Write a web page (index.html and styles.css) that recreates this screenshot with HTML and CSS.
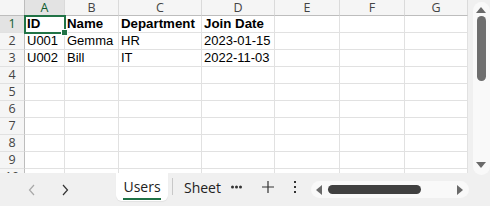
FILE: index.html
```html
<!DOCTYPE html>
<html>
<head>
<meta charset="utf-8">
<link rel="stylesheet" href="styles.css">
</head>
<body>
<div class="app">
  <div class="top">
    <div class="sheet">
      <div class="row hdr">
        <div class="c rh corner"></div>
        <div class="c w-a sel-h">A</div>
        <div class="c w-b">B</div>
        <div class="c w-c">C</div>
        <div class="c w-d">D</div>
        <div class="c w-e">E</div>
        <div class="c w-f">F</div>
        <div class="c w-g">G</div>
      </div>
      <div class="row bold">
        <div class="c rh sel-h">1</div>
        <div class="c w-a">ID</div>
        <div class="c w-b">Name</div>
        <div class="c w-c">Department</div>
        <div class="c w-d">Join Date</div>
        <div class="c w-e"></div><div class="c w-f"></div><div class="c w-g"></div>
      </div>
      <div class="row">
        <div class="c rh">2</div>
        <div class="c w-a">U001</div>
        <div class="c w-b">Gemma</div>
        <div class="c w-c">HR</div>
        <div class="c w-d">2023-01-15</div>
        <div class="c w-e"></div><div class="c w-f"></div><div class="c w-g"></div>
      </div>
      <div class="row">
        <div class="c rh">3</div>
        <div class="c w-a">U002</div>
        <div class="c w-b">Bill</div>
        <div class="c w-c">IT</div>
        <div class="c w-d">2022-11-03</div>
        <div class="c w-e"></div><div class="c w-f"></div><div class="c w-g"></div>
      </div>
      <div class="row"><div class="c rh">4</div><div class="c w-a"></div><div class="c w-b"></div><div class="c w-c"></div><div class="c w-d"></div><div class="c w-e"></div><div class="c w-f"></div><div class="c w-g"></div></div>
      <div class="row"><div class="c rh">5</div><div class="c w-a"></div><div class="c w-b"></div><div class="c w-c"></div><div class="c w-d"></div><div class="c w-e"></div><div class="c w-f"></div><div class="c w-g"></div></div>
      <div class="row"><div class="c rh">6</div><div class="c w-a"></div><div class="c w-b"></div><div class="c w-c"></div><div class="c w-d"></div><div class="c w-e"></div><div class="c w-f"></div><div class="c w-g"></div></div>
      <div class="row"><div class="c rh">7</div><div class="c w-a"></div><div class="c w-b"></div><div class="c w-c"></div><div class="c w-d"></div><div class="c w-e"></div><div class="c w-f"></div><div class="c w-g"></div></div>
      <div class="row"><div class="c rh">8</div><div class="c w-a"></div><div class="c w-b"></div><div class="c w-c"></div><div class="c w-d"></div><div class="c w-e"></div><div class="c w-f"></div><div class="c w-g"></div></div>
      <div class="row"><div class="c rh">9</div><div class="c w-a"></div><div class="c w-b"></div><div class="c w-c"></div><div class="c w-d"></div><div class="c w-e"></div><div class="c w-f"></div><div class="c w-g"></div></div>
      <div class="row"><div class="c rh">10</div><div class="c w-a"></div><div class="c w-b"></div><div class="c w-c"></div><div class="c w-d"></div><div class="c w-e"></div><div class="c w-f"></div><div class="c w-g"></div></div>
      <div class="selbox"><div class="handle"></div></div>
    </div>
    <div class="vbar">
      <div class="vtrack">
        <div class="tri up"></div>
        <div class="vthumb"></div>
        <div class="vspace"></div>
        <div class="tri down"></div>
      </div>
    </div>
  </div>
  <div class="tabs">
    <div class="nav dim">
      <svg width="10" height="12" viewBox="0 0 10 12"><path d="M7 1 L2.5 6 L7 11" fill="none" stroke="#a8a8a8" stroke-width="1.2"/></svg>
    </div>
    <div class="nav">
      <svg width="10" height="12" viewBox="0 0 10 12"><path d="M3 1 L7.5 6 L3 11" fill="none" stroke="#333" stroke-width="1.2"/></svg>
    </div>
    <div class="tab active"><span>Users</span></div>
    <div class="sep"></div>
    <div class="tab other">Sheet</div>
    <div class="dots">
      <svg width="11" height="4" viewBox="0 0 11 4"><circle cx="1.5" cy="2" r="1.5" fill="#333"/><circle cx="5.5" cy="2" r="1.5" fill="#333"/><circle cx="9.5" cy="2" r="1.5" fill="#333"/></svg>
    </div>
    <div class="plus">
      <svg width="14" height="14" viewBox="0 0 14 14"><path d="M7 1 V13 M1 7 H13" stroke="#333" stroke-width="1.2"/></svg>
    </div>
    <div class="kebab">
      <svg width="4" height="14" viewBox="0 0 4 14"><rect x="1" y="1" width="2" height="2" fill="#333"/><rect x="1" y="6" width="2" height="2" fill="#333"/><rect x="1" y="11" width="2" height="2" fill="#333"/></svg>
    </div>
    <div class="htrack">
      <div class="tri left"></div>
      <div class="hthumb"></div>
      <div class="hspace"></div>
      <div class="tri right"></div>
    </div>
  </div>
</div>
</body>
</html>
```

FILE: styles.css
```css
* { box-sizing: border-box; }
html, body { margin: 0; padding: 0; }
body { background: #f0f0f0; width: 490px; height: 206px; overflow: hidden; }
.app { width: 490px; height: 206px; display: flex; flex-direction: column; }
.top { display: flex; height: 173px; }
.sheet { position: relative; width: 468px; height: 173px; overflow: hidden; background: #fff; }
.row { display: flex; height: 17px; font-family: "Liberation Sans", Arial, sans-serif; font-size: 13px; color: #000; }
.row.bold { font-weight: bold; font-size: 13.3px; }
.c { flex: none; height: 17px; border-right: 1px solid #e1e1e1; border-bottom: 1px solid #e1e1e1; padding-left: 2px; line-height: 16px; white-space: nowrap; overflow: hidden; }
.w-a { width: 40px; }
.w-b { width: 54px; }
.w-c { width: 83px; }
.w-d { width: 73px; }
.w-e { width: 65px; }
.w-f { width: 65px; }
.w-g { width: 63px; }
.rh { width: 25px; background: #f5f5f5; border-right: 1px solid #bdbdbd; color: #444; font-family: "Open Sans", "Noto Sans", sans-serif; font-weight: normal; font-size: 12.5px; text-align: center; padding-left: 0; }
.row.bold .rh { font-size: 12.5px; }
.hdr { height: 16px; }
.hdr .c { height: 16px; background: #f5f5f5; border-bottom: 1px solid #bdbdbd; border-right-color: #dadada; text-align: center; padding-left: 0; color: #444; font-family: "Open Sans", "Noto Sans", sans-serif; font-size: 12.5px; line-height: 15px; }
.hdr .corner { border-right-color: #bdbdbd; }
.sel-h, .hdr .sel-h { background: #e3e3e3; color: #0f5c2e; }
.selbox { position: absolute; left: 24px; top: 15px; width: 42px; height: 19px; border: 2px solid #217346; }
.handle { position: absolute; right: -4px; bottom: -4px; width: 5px; height: 5px; background: #217346; border: 1px solid #fff; box-sizing: content-box; }
.vbar { width: 22px; height: 173px; padding: 2px 0 0 5px; background: #f0f0f0; }
.vtrack { width: 17px; height: 173px; background: #f9f9f9; border-radius: 9px; display: flex; flex-direction: column; align-items: center; padding-top: 5px; }
.vthumb { width: 9px; height: 65px; margin-top: 3px; background: #6e6e6e; border-radius: 5px; margin-left: -1px; }
.vspace { flex: 1; }
.tri { width: 0; height: 0; border-style: solid; }
.tri.up { border-width: 0 5px 6px 5px; border-color: transparent transparent #6a6a6a transparent; margin-left: -1px; }
.tri.down { border-width: 6px 5px 0 5px; border-color: #6a6a6a transparent transparent transparent; margin-bottom: 7px; margin-left: -1px; }
.tri.left { border-width: 5px 6px 5px 0; border-color: transparent #6a6a6a transparent transparent; }
.tri.right { border-width: 5px 0 5px 6px; border-color: transparent transparent transparent #6a6a6a; }
.tabs { height: 33px; display: flex; align-items: flex-start; font-family: "Open Sans", "Noto Sans", sans-serif; font-size: 14px; color: #222; }
.nav { width: 33px; height: 33px; display: flex; align-items: center; justify-content: center; }
.nav:first-child { margin-left: 15px; }
.tab { height: 28px; display: flex; align-items: center; }
.tab.active { margin-left: 35px; width: 52px; background: #fff; border-radius: 0 0 6px 6px; justify-content: center; box-shadow: 0 1px 1px rgba(0,0,0,0.06); }
.tab.active span { border-bottom: 2px solid #1e7145; line-height: 20px; padding-bottom: 1px; margin-top: 2px; }
.sep { width: 1px; height: 17px; background: #c8c8c8; margin: 5px 0 0 4px; }
.tab.other { margin-left: 11px; }
.dots { margin-left: 10px; height: 28px; display: flex; align-items: center; }
.plus { margin-left: 19px; height: 28px; display: flex; align-items: center; }
.kebab { margin-left: 18px; height: 28px; display: flex; align-items: center; }
.htrack { margin: 8px 0 0 14px; width: 158px; height: 17px; background: #f9f9f9; border-radius: 9px; display: flex; align-items: center; padding: 0 6px 0 5px; }
.hthumb { width: 93px; height: 9px; margin-left: 6px; background: #404040; border-radius: 5px; }
.hspace { flex: 1; }
```
